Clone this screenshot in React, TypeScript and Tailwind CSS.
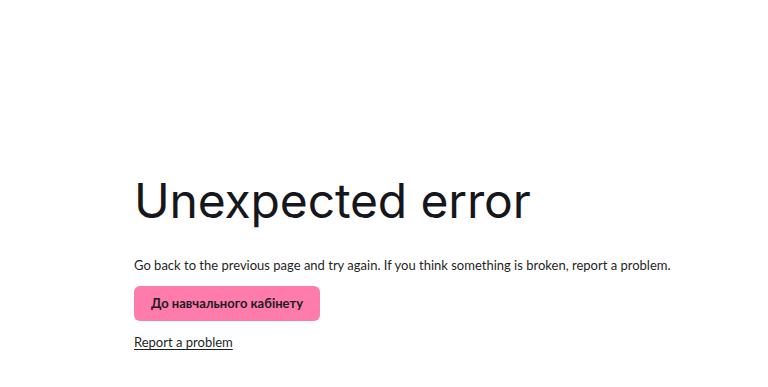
import React from 'react';

const App: React.FC = () => {
  return (
    <div className="min-h-screen bg-white text-[#16161d]" style={{ fontFamily: 'Lato, "Noto Sans", sans-serif' }}>
      <div className="pt-[172px] pl-[134px] pr-8">
        <h1 className="font-['Inter',sans-serif] text-[48px] leading-[58px] font-normal tracking-[-0.15px]">Unexpected error</h1>

        <p className="mt-[25px] text-[13px] leading-[20px] text-[#1f1f26]">
          Go back to the previous page and try again. If you think something is broken, report a problem.
        </p>

        <button className="mt-[11px] h-[35px] w-[186px] rounded-md bg-[#ff7bac] text-[13px] font-bold text-[#1d1b22]">
          До навчального кабінету
        </button>

        <div className="mt-[8px]">
          <a href="#" className="text-[13px] leading-[20px] underline underline-offset-2 text-[#1f1f26]">
            Report a problem
          </a>
        </div>
      </div>
    </div>
  );
};

export default App;
